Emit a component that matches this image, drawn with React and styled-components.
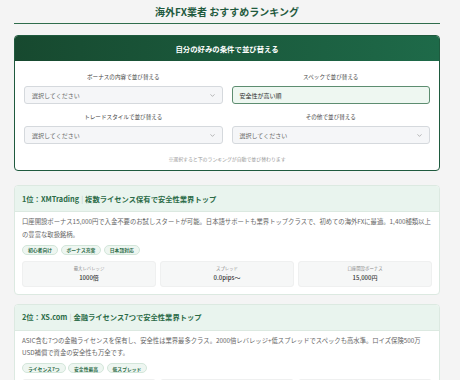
import React from 'react';
import styled, { createGlobalStyle } from 'styled-components';
import { ChevronDown } from 'lucide-react';

const GlobalStyle = createGlobalStyle`
  body {
    margin: 0;
    background: #f4f4f4;
    font-family: "Noto Sans CJK JP", "Noto Sans", sans-serif;
    color: #333;
  }
`

const Page = styled.div`
  padding: 0 20px 20px 14px;
`

const PageHeader = styled.div`
  padding: 5px 0 4px;
  border-bottom: 1.5px solid #2f6d4c;
`

const PageTitle = styled.h1`
  margin: 0;
  text-align: center;
  font-size: 10px;
  line-height: 14px;
  font-weight: 700;
  color: #1f5a3e;
`

const Panel = styled.div`
  margin-top: 11px;
  border: 1px solid #1f5a3e;
  border-radius: 4px;
  overflow: hidden;
  background: #fff;
`

const PanelHead = styled.div`
  height: 25px;
  display: flex;
  align-items: center;
  justify-content: center;
  background: linear-gradient(90deg, #17492f 0%, #1e6a49 100%);
  color: #fff;
  font-size: 7.4px;
  font-weight: 700;
`

const PanelBody = styled.div`
  padding: 12px 9px 7px;
`

const FieldGrid = styled.div`
  display: grid;
  grid-template-columns: 1fr 1fr;
  column-gap: 9px;
  row-gap: 9px;
`

const Field = styled.div`
  display: flex;
  flex-direction: column;
`

const FieldLabel = styled.div`
  text-align: center;
  font-size: 5.6px;
  line-height: 8px;
  color: #444;
  margin-bottom: 5px;
`

const Select = styled.div`
  height: 18px;
  box-sizing: border-box;
  display: flex;
  align-items: center;
  justify-content: space-between;
  padding: 0 6px 0 7px;
  border: 1px solid ${p => (p.active ? '#5d8d70' : '#d5d9dd')};
  border-radius: 3px;
  background: ${p => (p.active ? '#eef7f1' : '#f5f6f8')};
  font-size: 6px;
  color: ${p => (p.active ? '#2a2a2a' : '#666')};
`

const Note = styled.div`
  margin-top: 11px;
  text-align: center;
  font-size: 4.9px;
  line-height: 8px;
  color: #999;
`

const Card = styled.div`
  margin-top: ${p => p.gap}px;
  border: 1px solid #dce9e1;
  border-radius: 4px;
  background: #fff;
  overflow: hidden;
`

const CardHead = styled.div`
  height: 25px;
  display: flex;
  align-items: center;
  padding: 0 7px;
  background: #e9f4ee;
  border-bottom: 1px solid #dce9e1;
  font-size: 7.3px;
  font-weight: 700;
  color: #2b6b47;
`

const Sep = styled.span`
  color: #c2cbc5;
  font-weight: 400;
  margin: 0 2px;
`

const CardBody = styled.div`
  padding: 4px 7px 7px;
`

const Desc = styled.p`
  margin: 0;
  font-size: 6.33px;
  line-height: 12.5px;
  color: #666;
`

const Tags = styled.div`
  display: flex;
  gap: 2.5px;
  margin-top: 3.5px;
`

const Tag = styled.span`
  height: 10px;
  box-sizing: border-box;
  display: inline-flex;
  align-items: center;
  padding: 0 5px;
  border: 1px solid #d3e6da;
  border-radius: 6px;
  background: #eef6f1;
  font-size: 4.8px;
  font-weight: 700;
  color: #2b6b47;
`

const Stats = styled.div`
  display: grid;
  grid-template-columns: repeat(3, 1fr);
  gap: 4px;
  margin-top: 6px;
`

const Stat = styled.div`
  height: 26px;
  border-radius: 3px;
  background: #f6f7f7;
  border: 1px solid #eff0f0;
  box-sizing: border-box;
  display: flex;
  flex-direction: column;
  align-items: center;
  justify-content: center;
  gap: 3px;
`

const StatLabel = styled.div`
  font-size: 4.4px;
  line-height: 5px;
  color: #888;
`

const StatValue = styled.div`
  font-size: 6px;
  line-height: 7px;
  font-weight: 500;
  color: #333;
`

const fields = [
  { label: 'ボーナスの内容で並び替える', value: '選択してください' },
  { label: 'スペックで並び替える', value: '安全性が高い順', active: true },
  { label: 'トレードスタイルで並び替える', value: '選択してください' },
  { label: 'その他で並び替える', value: '選択してください' },
]

const brokers = [
  {
    rank: '1位：XMTrading',
    catch: '複数ライセンス保有で安全性業界トップ',
    desc: '口座開設ボーナス15,000円で入金不要のお試しスタートが可能。日本語サポートも業界トップクラスで、初めての海外FXに最適。1,400種類以上の豊富な取扱銘柄。',
    tags: ['初心者向け', 'ボーナス充実', '日本語対応'],
    stats: [['最大レバレッジ', '1000倍'], ['スプレッド', '0.0pips〜'], ['口座開設ボーナス', '15,000円']],
  },
  {
    rank: '2位：XS.com',
    catch: '金融ライセンス7つで安全性業界トップ',
    desc: 'ASIC含む7つの金融ライセンスを保有し、安全性は業界最多クラス。2000倍レバレッジ+低スプレッドでスペックも高水準。ロイズ保険500万USD補償で資金の安全性も万全です。',
    tags: ['ライセンス7つ', '安全性最高', '低スプレッド'],
    stats: [['最大レバレッジ', '2000倍'], ['スプレッド', '0.0pips〜'], ['口座開設ボーナス', '—']],
  },
]

function App() {
  return (
    <Page>
      <GlobalStyle />
      <PageHeader>
        <PageTitle>海外FX業者 おすすめランキング</PageTitle>
      </PageHeader>

      <Panel>
        <PanelHead>自分の好みの条件で並び替える</PanelHead>
        <PanelBody>
          <FieldGrid>
            {fields.map(f => (
              <Field key={f.label}>
                <FieldLabel>{f.label}</FieldLabel>
                <Select active={f.active}>
                  <span>{f.value}</span>
                  {!f.active && <ChevronDown size={7} color="#888" strokeWidth={2} />}
                </Select>
              </Field>
            ))}
          </FieldGrid>
          <Note>※選択すると下のランキングが自動で並び替わります</Note>
        </PanelBody>
      </Panel>

      {brokers.map((b, i) => (
        <Card key={b.rank} gap={i === 0 ? 14 : 9}>
          <CardHead>
            {b.rank}<Sep>|</Sep>{b.catch}
          </CardHead>
          <CardBody>
            <Desc>{b.desc}</Desc>
            <Tags>
              {b.tags.map(t => <Tag key={t}>{t}</Tag>)}
            </Tags>
            <Stats>
              {b.stats.map(([label, value]) => (
                <Stat key={label}>
                  <StatLabel>{label}</StatLabel>
                  <StatValue>{value}</StatValue>
                </Stat>
              ))}
            </Stats>
          </CardBody>
        </Card>
      ))}
    </Page>
  );
}

export default App;
